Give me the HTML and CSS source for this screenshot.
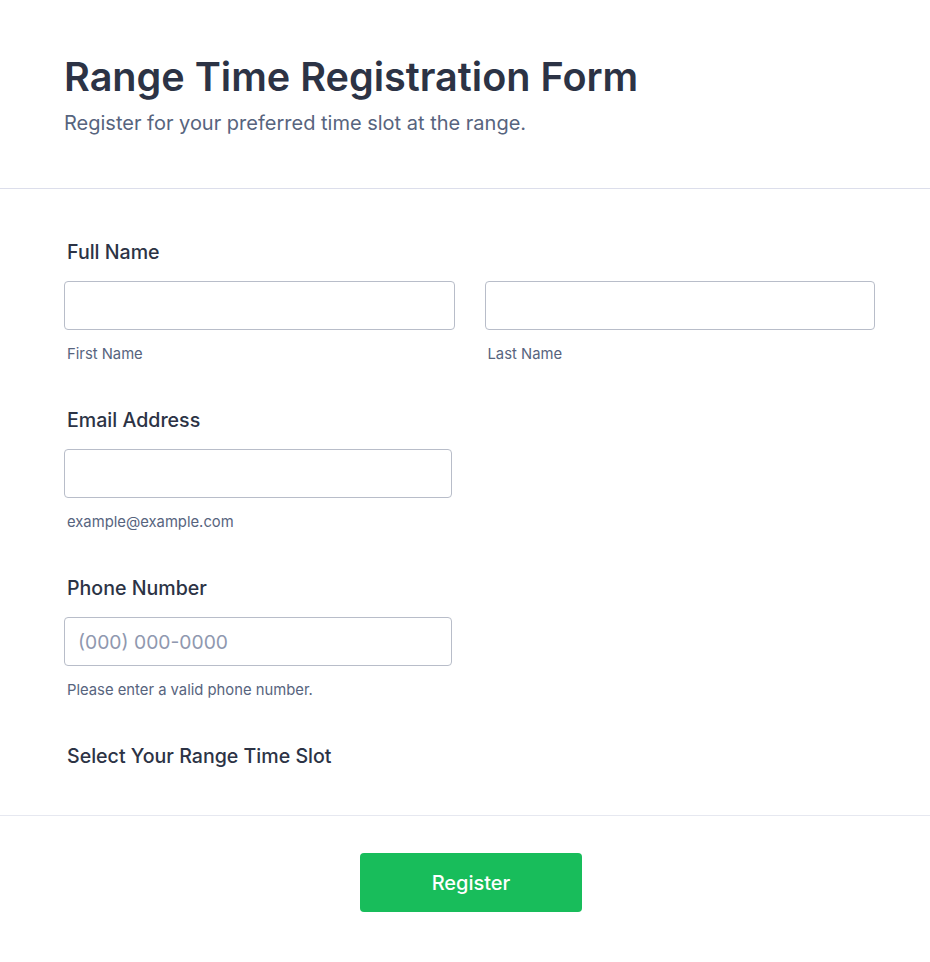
FILE: index.html
```html
<!DOCTYPE html>
<html>
<head>
<meta charset="utf-8">
<link rel="stylesheet" href="styles.css">
</head>
<body>
<div class="page">
  <header class="header">
    <h1 class="title">Range Time Registration Form</h1>
    <p class="subtitle">Register for your preferred time slot at the range.</p>
  </header>
  <section class="fields">
    <div class="field">
      <div class="label">Full Name</div>
      <div class="row">
        <div class="col">
          <input class="input" type="text">
          <div class="sub">First Name</div>
        </div>
        <div class="col">
          <input class="input" type="text">
          <div class="sub">Last Name</div>
        </div>
      </div>
    </div>
    <div class="field">
      <div class="label">Email Address</div>
      <div class="col half">
        <input class="input" type="text">
        <div class="sub">example@example.com</div>
      </div>
    </div>
    <div class="field">
      <div class="label">Phone Number</div>
      <div class="col half">
        <input class="input" type="text" placeholder="(000) 000-0000">
        <div class="sub">Please enter a valid phone number.</div>
      </div>
    </div>
    <div class="field last">
      <div class="label">Select Your Range Time Slot</div>
    </div>
  </section>
  <footer class="footer">
    <button class="btn">Register</button>
  </footer>
</div>
</body>
</html>
```

FILE: styles.css
```css
* { box-sizing: border-box; }
html, body { margin: 0; padding: 0; background: #ffffff; }
body {
  font-family: Inter, "Noto Sans", sans-serif;
  color: #2c3345;
}
.page { width: 930px; }
.header {
  padding: 54px 64px 0;
  height: 189px;
  border-bottom: 1px solid #dcdeeb;
}
.title {
  margin: 0;
  font-size: 39.6px;
  line-height: 46px;
  font-weight: 600;
  color: #2c3345;
}
.subtitle {
  margin: 0;
  margin-top: 11px;
  font-size: 20px;
  line-height: 24px;
  font-weight: 400;
  color: #57647e;
}
.fields {
  padding: 51px 55px 47px 64px;
  border-bottom: 1px solid #e6e8f0;
}
.field { margin-bottom: 44px; }
.field.last { margin-bottom: 0; }
.label {
  font-size: 19.6px;
  line-height: 24px;
  font-weight: 500;
  color: #2c3345;
  padding-left: 3px;
  margin-bottom: 17px;
}
.field.last .label { margin-bottom: 0; }
.row { display: flex; gap: 30px; }
.col { flex: 1; display: flex; flex-direction: column; }
.col.half { width: 388px; flex: none; }
.input {
  width: 100%;
  height: 49px;
  border: 1px solid #b8bdc9;
  border-radius: 4px;
  padding: 0 13px;
  font-family: Inter, "Noto Sans", sans-serif;
  font-size: 19.3px;
  color: #2c3345;
  background: #fff;
  outline: none;
}
.input::placeholder { color: #8f98af; }
.sub {
  margin-top: 14px;
  font-size: 14.8px;
  line-height: 20px;
  color: #57647e;
  padding-left: 3px;
}
.footer {
  display: flex;
  justify-content: center;
  padding: 37px 0 50px 12px;
}
.btn {
  width: 222px;
  height: 59px;
  border: none;
  border-radius: 4px;
  background: #18bd5b;
  color: #ffffff;
  font-family: Inter, "Noto Sans", sans-serif;
  font-size: 20px;
  font-weight: 500;
}
```
